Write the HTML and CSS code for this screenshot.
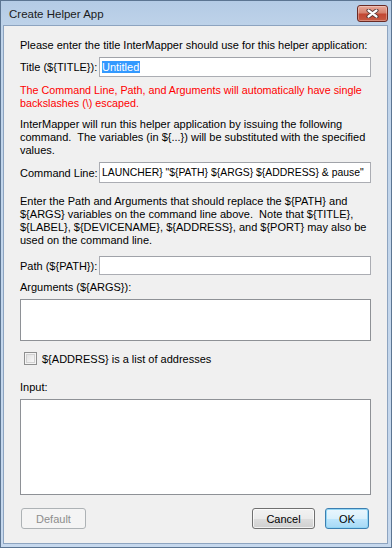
FILE: index.html
```html
<!DOCTYPE html>
<html>
<head>
<meta charset="utf-8">
<title>Create Helper App</title>
<link rel="stylesheet" href="styles.css">
</head>
<body>
<div class="window">
  <div class="titlebar">
    <span class="title">Create Helper App</span>
    <div class="close">
      <svg width="13" height="9" viewBox="0 0 13 9">
        <path d="M2.5 1.5 L10.5 7.5 M10.5 1.5 L2.5 7.5" stroke="#4b3030" stroke-width="4" stroke-linecap="round" fill="none"/>
        <path d="M2.5 1.5 L10.5 7.5 M10.5 1.5 L2.5 7.5" stroke="#ffffff" stroke-width="2.2" stroke-linecap="round" fill="none"/>
      </svg>
    </div>
  </div>
  <div class="client">
    <p class="text t1">Please enter the title InterMapper should use for this helper application:</p>
    <div class="row r-title">
      <span class="label">Title (${TITLE}):</span>
      <div class="field f-title"><span class="sel">Untitled</span></div>
    </div>
    <p class="text warn">The Command Line, Path, and Arguments will automatically have single<br>backslashes (\) escaped.</p>
    <p class="text t2">InterMapper will run this helper application by issuing the following<br>command.&nbsp; The variables (in ${...}) will be substituted with the specified<br>values.</p>
    <div class="row r-cmd">
      <span class="label">Command Line:</span>
      <div class="field f-cmd">LAUNCHER} "${PATH} ${ARGS} ${ADDRESS} &amp; pause"</div>
    </div>
    <p class="text t3">Enter the Path and Arguments that should replace the ${PATH} and<br>${ARGS} variables on the command line above.&nbsp; Note that ${TITLE},<br>${LABEL}, ${DEVICENAME}, ${ADDRESS}, and ${PORT} may also be<br>used on the command line.</p>
    <div class="row r-path">
      <span class="label">Path (${PATH}):</span>
      <div class="field f-path"></div>
    </div>
    <p class="text t4">Arguments (${ARGS}):</p>
    <div class="area a-args"></div>
    <div class="check">
      <span class="box"></span>
      <span class="check-label">${ADDRESS} is a list of addresses</span>
    </div>
    <p class="text t5">Input:</p>
    <div class="area a-input"></div>
    <div class="buttons">
      <div class="btn btn-default">Default</div>
      <div class="spacer"></div>
      <div class="btn btn-cancel">Cancel</div>
      <div class="btn btn-ok">OK</div>
    </div>
  </div>
</div>
</body>
</html>
```
FILE: styles.css
```css
html, body {
  margin: 0;
  padding: 0;
  width: 392px;
  height: 548px;
  overflow: hidden;
}
body {
  font-family: "Liberation Sans", Arial, sans-serif;
  font-size: 11px;
  color: #000;
}
.window {
  box-sizing: border-box;
  width: 392px;
  height: 548px;
  border: 1px solid #5c7592;
  background: linear-gradient(to bottom, #b4cbe5 0px, #c0d4ea 30px, #c6d8ed 100%);
  padding: 0 3px 3px 2px;
  display: flex;
  flex-direction: column;
}
.titlebar {
  height: 24px;
  display: flex;
  align-items: flex-start;
  justify-content: space-between;
}
.title {
  font-family: "Liberation Sans", Arial, sans-serif;
  font-size: 11.5px;
  color: #1b1b1b;
  margin: 7px 0 0 6px;
}
.close {
  box-sizing: border-box;
  width: 31px;
  height: 17px;
  margin: 4px 0 0 0;
  border: 1px solid #6a2a24;
  border-radius: 3px;
  background: linear-gradient(to bottom, #e8a898 0%, #d6826f 45%, #c24733 55%, #c65a44 100%);
  display: flex;
  align-items: center;
  justify-content: center;
  box-shadow: inset 0 0 0 1px rgba(255,255,255,0.3);
}
.client {
  flex: 1;
  background: #f0f0f0;
  border: 1px solid #8da4c0;
  padding: 0 16px 0 16px;
  display: flex;
  flex-direction: column;
}
.text {
  margin: 0;
  line-height: 13px;
}
.t1 { margin-top: 13px; }
.row {
  display: flex;
  align-items: center;
}
.label {
  width: 79px;
  flex: none;
  white-space: nowrap;
}
.field {
  box-sizing: border-box;
  flex: 1;
  height: 20px;
  background: #fff;
  border: 1px solid #abadb3;
  border-top-color: #a0a3a9;
  display: flex;
  align-items: center;
  padding-left: 2px;
  white-space: nowrap;
  overflow: hidden;
}
.r-title { margin-top: 5px; }
.sel {
  background: #3399ff;
  color: #fff;
  line-height: 12px;
  padding: 0 1px 0 0;
}
.warn {
  color: #ff0000;
  margin-top: 7px;
  font-size: 10.75px;
}
.t2 { margin-top: 8px; }
.r-cmd { margin-top: 5px; }
.f-cmd {
  height: 21px;
  font-size: 10.4px;
}
.t3 { margin-top: 12px; }
.r-path { margin-top: 9px; }
.f-path { height: 19px; }
.t4 { margin-top: 6px; }
.area {
  box-sizing: border-box;
  background: #fff;
  border: 1px solid #8e9196;
}
.a-args {
  height: 42px;
  margin-top: 5px;
}
.check {
  display: flex;
  align-items: center;
  margin-top: 11px;
  height: 13px;
}
.box {
  box-sizing: border-box;
  width: 13px;
  height: 13px;
  margin-left: 4px;
  margin-right: 5px;
  border: 1px solid #8e8f8f;
  background: linear-gradient(135deg, #dcdcdc 0%, #f0f0f0 60%, #ffffff 100%);
  box-shadow: inset 0 0 0 1px #f4f4f4, inset 0 0 0 2px #d2d2d2;
}
.t5 { margin-top: 16px; }
.a-input {
  height: 96px;
  margin-top: 5px;
}
.buttons {
  display: flex;
  margin-top: 13px;
  align-items: center;
}
.spacer { flex: 1; }
.btn {
  box-sizing: border-box;
  height: 21px;
  border: 1px solid #707070;
  border-radius: 3px;
  background: linear-gradient(to bottom, #f2f2f2 0%, #ebebeb 50%, #dddddd 51%, #cfcfcf 100%);
  box-shadow: inset 0 0 0 1px rgba(255,255,255,0.7);
  display: flex;
  align-items: center;
  justify-content: center;
  font-size: 11px;
}
.btn-default {
  width: 65px;
  margin-left: 1px;
  color: #8d8d8d;
  border-color: #adb2b5;
  background: #f4f4f4;
  box-shadow: none;
}
.btn-cancel {
  width: 63px;
}
.btn-ok {
  width: 44px;
  margin-left: 10px;
  margin-right: 2px;
  border-color: #3c7fb1;
  box-shadow: inset 0 0 0 1px #92d6f5;
  background: linear-gradient(to bottom, #eaf6fd 0%, #d9f0fc 50%, #bee6fd 51%, #a7d9f5 100%);
}
```
